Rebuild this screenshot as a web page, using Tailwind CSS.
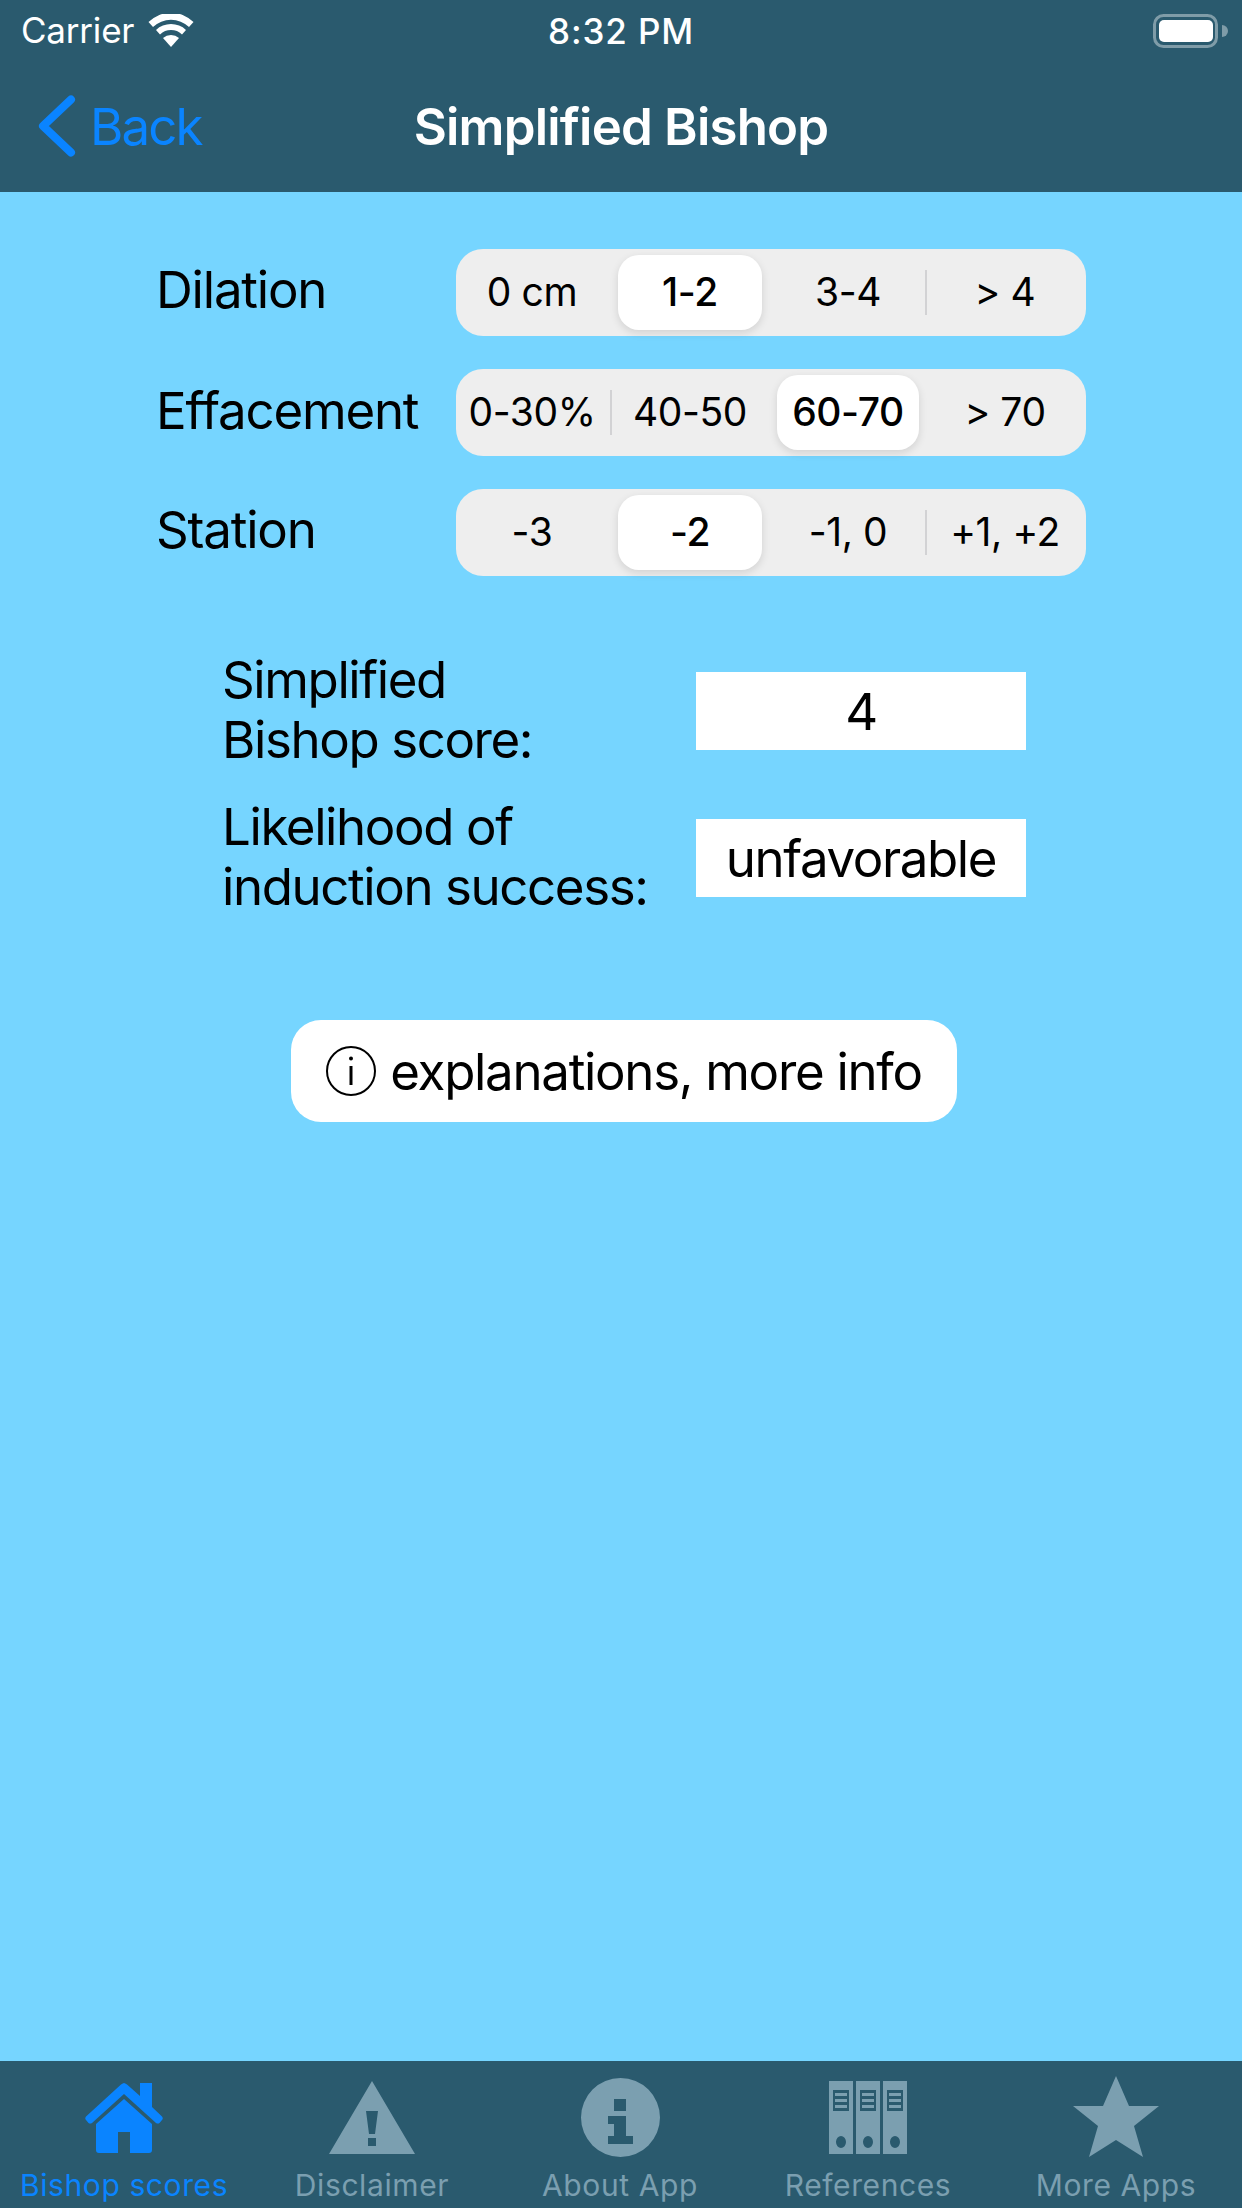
<!DOCTYPE html>
<html lang="en">
<head>
  <meta charset="UTF-8" />
  <title>Simplified Bishop</title>
  <script src="https://cdn.jsdelivr.net/npm/@tailwindcss/browser@4"></script>
</head>
<body class="w-[1242px] h-[2208px] flex flex-col bg-[#76d5ff] text-black font-['Inter',sans-serif] overflow-hidden">

  <!-- Status bar + nav -->
  <header class="h-[192px] shrink-0 bg-[#2a5a6e] text-white relative">
    <div class="h-[60px] flex items-center justify-between pl-[21px] pr-[14px] pt-[1px]">
      <div class="flex items-center gap-[14px]">
        <span class="text-[35px] tracking-[-0.2px]">Carrier</span>
        <svg width="46" height="33" viewBox="0 0 46 33" fill="#fff">
          <path d="M23 33 L15 24 A12 12 0 0 1 31 24 Z" />
          <path d="M12 20.500 L8 16 A22 22 0 0 1 38 16 L34 20.500 A16 16 0 0 0 12 20.500 Z" />
          <path d="M5 13 L0.500 8 A32 32 0 0 1 45.500 8 L41 13 A26 26 0 0 0 5 13 Z" />
        </svg>
      </div>
      <span class="absolute left-[548px] top-[5px] text-[35px] font-medium tracking-[0.9px]">8:32 PM</span>
      <svg width="75" height="34" viewBox="0 0 75 34">
        <rect x="1.500" y="1.500" width="62" height="31" rx="9" fill="none" stroke="#fff" stroke-opacity="0.4" stroke-width="3" />
        <rect x="6" y="6" width="54" height="22" rx="5" fill="#fff" />
        <path d="M69 11 a6 6 0 0 1 0 12 z" fill="#fff" fill-opacity="0.4" />
      </svg>
    </div>
    <div class="h-[132px] relative flex items-center justify-center">
      <div class="absolute left-[38px] top-[35px] flex items-center gap-[14px] text-[#0a84ff]">
        <svg width="38" height="62" viewBox="0 0 38 62" fill="none" stroke="currentColor" stroke-width="8" stroke-linecap="round" stroke-linejoin="round">
          <path d="M33 4.500 L5 31 L33 57.500" />
        </svg>
        <span class="text-[51px] tracking-[-1.9px] leading-none">Back</span>
      </div>
      <span class="text-[51px] font-semibold tracking-[-0.8px] leading-none">Simplified Bishop</span>
    </div>
  </header>

  <main class="flex-1 flex flex-col">
    <!-- Selectors -->
    <section class="pt-[57px] pl-[156px] flex flex-col gap-[33px]">
      <div class="flex items-center">
        <span class="w-[300px] pb-[6px] text-[51px] tracking-[-1.2px] leading-none">Dilation</span>
        <div class="w-[630px] h-[87px] rounded-[27px] bg-[#eeeeee] grid grid-cols-[155px_158px_158px_159px] items-center text-center text-[39px] tracking-[-0.4px] relative">
          <span class="pr-[3px]">0 cm</span>
          <span class="h-[75px] mx-[7px] rounded-[21px] bg-white shadow-[0_3px_8px_rgba(0,0,0,0.12)] font-medium flex items-center justify-center">1-2</span>
          <span>3-4</span>
          <span class="pr-[3px]">&gt; 4</span>
          <i class="absolute left-[469px] top-[21px] h-[45px] w-[2px] bg-[#d2d2d4]"></i>
        </div>
      </div>
      <div class="flex items-center">
        <span class="w-[300px] pb-[5px] text-[51px] tracking-[-1.2px] leading-none">Effacement</span>
        <div class="w-[630px] h-[87px] rounded-[27px] bg-[#eeeeee] grid grid-cols-[155px_158px_158px_159px] items-center text-center text-[39px] tracking-[-0.4px] relative">
          <span class="pr-[3px]">0-30%</span>
          <span>40-50</span>
          <span class="h-[75px] mx-[8px] rounded-[21px] bg-white shadow-[0_3px_8px_rgba(0,0,0,0.12)] font-medium flex items-center justify-center">60-70</span>
          <span class="pr-[3px]">&gt; 70</span>
          <i class="absolute left-[154px] top-[21px] h-[45px] w-[2px] bg-[#d2d2d4]"></i>
        </div>
      </div>
      <div class="flex items-center">
        <span class="w-[300px] pb-[6px] text-[51px] tracking-[-1.2px] leading-none">Station</span>
        <div class="w-[630px] h-[87px] rounded-[27px] bg-[#eeeeee] grid grid-cols-[155px_158px_158px_159px] items-center text-center text-[39px] tracking-[-0.4px] relative">
          <span class="pr-[3px]">-3</span>
          <span class="h-[75px] mx-[7px] rounded-[21px] bg-white shadow-[0_3px_8px_rgba(0,0,0,0.12)] font-medium flex items-center justify-center">-2</span>
          <span>-1, 0</span>
          <span class="pr-[3px]">+1, +2</span>
          <i class="absolute left-[469px] top-[21px] h-[45px] w-[2px] bg-[#d2d2d4]"></i>
        </div>
      </div>
    </section>

    <!-- Result -->
    <section class="mt-[74px] pl-[222px] flex flex-col gap-[25px]">
      <div class="flex items-center">
        <p class="w-[474px] pb-[2px] text-[51px] leading-[60px] tracking-[-1.4px]">Simplified<br>Bishop score:</p>
        <div class="w-[330px] h-[78px] pt-[2px] bg-white flex items-center justify-center text-[51px] tracking-[-1.4px]">4</div>
      </div>
      <div class="flex items-center">
        <p class="w-[474px] pb-[2px] text-[51px] leading-[60px] tracking-[-1.4px]">Likelihood of<br>induction success:</p>
        <div class="w-[330px] h-[78px] pt-[2px] bg-white flex items-center justify-center text-[51px] tracking-[-1.4px]">unfavorable</div>
      </div>
    </section>

    <div class="mt-[101px] flex justify-center">
      <div class="ml-[6px] w-[666px] h-[102px] rounded-[30px] bg-white flex items-center justify-center text-[51px] tracking-[-1.3px] leading-none gap-[14px]">
        <svg width="50" height="50" viewBox="0 0 50 50" fill="none" stroke="#000" stroke-width="2">
          <circle cx="25" cy="25" r="24" />
          <path d="M25 20 V39" stroke-width="3" />
          <circle cx="25" cy="12.500" r="2" fill="#000" stroke="none" />
        </svg>
        <span>explanations, more info</span>
      </div>
    </div>
  </main>

  <!-- Tab bar -->
  <nav class="h-[147px] shrink-0 bg-[#2a5a6e] grid grid-cols-5 pr-[2px] text-[30px] leading-none tracking-[0.6px] text-[#7b9fb0]">
    <div class="flex flex-col items-center text-[#0a84ff]">
      <svg class="mt-[22px]" width="78" height="70" viewBox="0 0 78 70" fill="currentColor">
        <path d="M39 0 Q40 0 42 1.500 L55 13 V0 H67 V24 L77 33.500 Q78.500 35.500 77 37 L74.500 40 Q73 41 71 40 L39 11 L7 40 Q5 41 3.500 40 L1 37 Q-0.500 35.500 1 33.500 L36 1.500 Q38 0 39 0 Z" />
        <path d="M39 16 L67 41 V67 Q67 70 64 70 H45 V49 H33 V70 H14 Q11 70 11 67 V41 Z" />
      </svg>
      <span class="mt-[17px]">Bishop scores</span>
    </div>
    <div class="flex flex-col items-center">
      <svg class="mt-[20px]" width="86" height="73" viewBox="0 0 86 73">
        <path fill-rule="evenodd" fill="currentColor" d="M43 0 L86 73 H0 Z M37 30 L40 53 H46 L49 30 Z M39 57 V65 H47 V57 Z" />
      </svg>
      <span class="mt-[16px]">Disclaimer</span>
    </div>
    <div class="flex flex-col items-center">
      <svg class="mt-[17px]" width="79" height="79" viewBox="0 0 79 79">
        <path fill-rule="evenodd" fill="currentColor" d="M39.500 0 A39.500 39.500 0 1 0 39.500 79 A39.500 39.500 0 1 0 39.500 0 Z M33 21 V33 H45 V21 Z M27 38 V46 H33 V58 H27 V66 H52 V58 H45 V38 Z" />
      </svg>
      <span class="mt-[13px]">About App</span>
    </div>
    <div class="flex flex-col items-center">
      <svg class="mt-[20px]" width="78" height="73" viewBox="0 0 78 73" fill="currentColor">
        <g>
          <path fill-rule="evenodd" d="M0 0 H24 V73 H0 Z M4 9 V30 H20 V9 Z M12 55 A5 6 0 1 0 12 67 A5 6 0 1 0 12 55 Z" />
          <path d="M6 12 H18 V15 H6 Z M6 18 H18 V21 H6 Z M6 24 H18 V27 H6 Z" />
        </g>
        <g transform="translate(27 0)">
          <path fill-rule="evenodd" d="M0 0 H24 V73 H0 Z M4 9 V30 H20 V9 Z M12 55 A5 6 0 1 0 12 67 A5 6 0 1 0 12 55 Z" />
          <path d="M6 12 H18 V15 H6 Z M6 18 H18 V21 H6 Z M6 24 H18 V27 H6 Z" />
        </g>
        <g transform="translate(54 0)">
          <path fill-rule="evenodd" d="M0 0 H24 V73 H0 Z M4 9 V30 H20 V9 Z M12 55 A5 6 0 1 0 12 67 A5 6 0 1 0 12 55 Z" />
          <path d="M6 12 H18 V15 H6 Z M6 18 H18 V21 H6 Z M6 24 H18 V27 H6 Z" />
        </g>
      </svg>
      <span class="mt-[16px]">References</span>
    </div>
    <div class="flex flex-col items-center">
      <svg class="mt-[15px]" width="86" height="81" viewBox="0 0 86 81">
        <path fill="currentColor" d="M43 0 L56 30 H86 L61 50 L70 81 L43 64 L16 81 L25 50 L0 30 H30 Z" />
      </svg>
      <span class="mt-[13px]">More Apps</span>
    </div>
  </nav>
</body>
</html>
